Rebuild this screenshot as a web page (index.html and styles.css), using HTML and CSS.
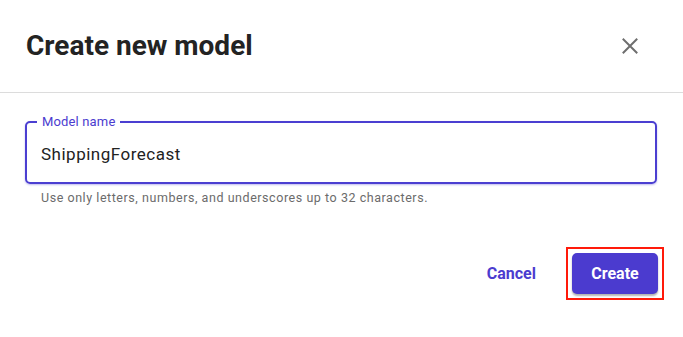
FILE: index.html
```html
<!DOCTYPE html>
<html lang="en">
<head>
<meta charset="utf-8">
<title>Create new model</title>
<link rel="stylesheet" href="styles.css">
</head>
<body>
<div class="dialog">
  <header class="dialog-header">
    <h1 class="dialog-title">Create new model</h1>
    <button class="close-btn" aria-label="Close">
      <svg width="16" height="16" viewBox="0 0 16 16" aria-hidden="true">
        <path d="M1.5 1.5 L14.5 14.5 M14.5 1.5 L1.5 14.5" stroke="#6e6e6e" stroke-width="2" fill="none" stroke-linecap="square"/>
      </svg>
    </button>
  </header>
  <main class="dialog-body">
    <fieldset class="field">
      <legend class="field-label">Model name</legend>
      <div class="field-value">ShippingForecast</div>
    </fieldset>
    <p class="field-help">Use only letters, numbers, and underscores up to 32 characters.</p>
  </main>
  <footer class="dialog-footer">
    <button class="btn-link">Cancel</button>
    <span class="highlight"><button class="btn-primary">Create</button></span>
  </footer>
</div>
</body>
</html>
```

FILE: styles.css
```css
* { box-sizing: border-box; }

html, body {
  margin: 0;
  padding: 0;
  background: #ffffff;
}

body {
  font-family: Roboto, "Noto Sans", "Liberation Sans", sans-serif;
  color: #222222;
}

.dialog {
  width: 683px;
  height: 337px;
  background: #ffffff;
}

.dialog-header {
  display: flex;
  align-items: center;
  justify-content: space-between;
  padding: 29px 41px 29px 26px;
  border-bottom: 1px solid #dcdcdc;
  height: 93px;
}

.dialog-title {
  margin: 0;
  font-size: 28px;
  line-height: 34px;
  font-weight: 700;
  color: #232323;
}

.close-btn {
  width: 24px;
  height: 24px;
  padding: 4px;
  margin: 0;
  border: 0;
  background: transparent;
  display: flex;
  align-items: center;
  justify-content: center;
  cursor: pointer;
}

.close-btn svg { display: block; }

.dialog-body {
  padding: 21px 26px 0 25px;
}

.field {
  margin: 0;
  padding: 14px 10px 18px 10px;
  border: 2px solid #4b3fd1;
  border-radius: 5px;
  box-shadow: 0 1px 2px rgba(75, 63, 209, 0.35);
  min-inline-size: 0;
}

.field-label {
  padding: 0 5px;
  font-size: 13px;
  line-height: 16px;
  letter-spacing: 0.15px;
  color: #4b3ccf;
}

.field-value {
  padding-left: 4px;
  font-size: 17px;
  line-height: 20px;
  letter-spacing: 0.5px;
  color: #222222;
}

.field-help {
  margin: 6px 0 0 16px;
  font-size: 12.5px;
  line-height: 16px;
  letter-spacing: 0.55px;
  color: #6b6b6b;
}

.dialog-footer {
  display: flex;
  justify-content: flex-end;
  align-items: center;
  gap: 11px;
  padding: 41px 19px 0 26px;
}

.btn-link {
  font-family: inherit;
  font-size: 16px;
  font-weight: 700;
  color: #4b3ccf;
  background: transparent;
  border: 0;
  padding: 0 19px;
  height: 40px;
  cursor: pointer;
}

.highlight {
  display: block;
  border: 2px solid #ff1a0a;
  padding: 4px;
  line-height: 0;
}

.btn-primary {
  font-family: inherit;
  font-size: 16px;
  line-height: 20px;
  font-weight: 700;
  color: #ffffff;
  background: #4b3bcf;
  border: 0;
  border-radius: 5px;
  width: 86px;
  height: 41px;
  padding: 0;
  box-shadow: 0 2px 2px rgba(0, 0, 0, 0.3);
  cursor: pointer;
}
```
